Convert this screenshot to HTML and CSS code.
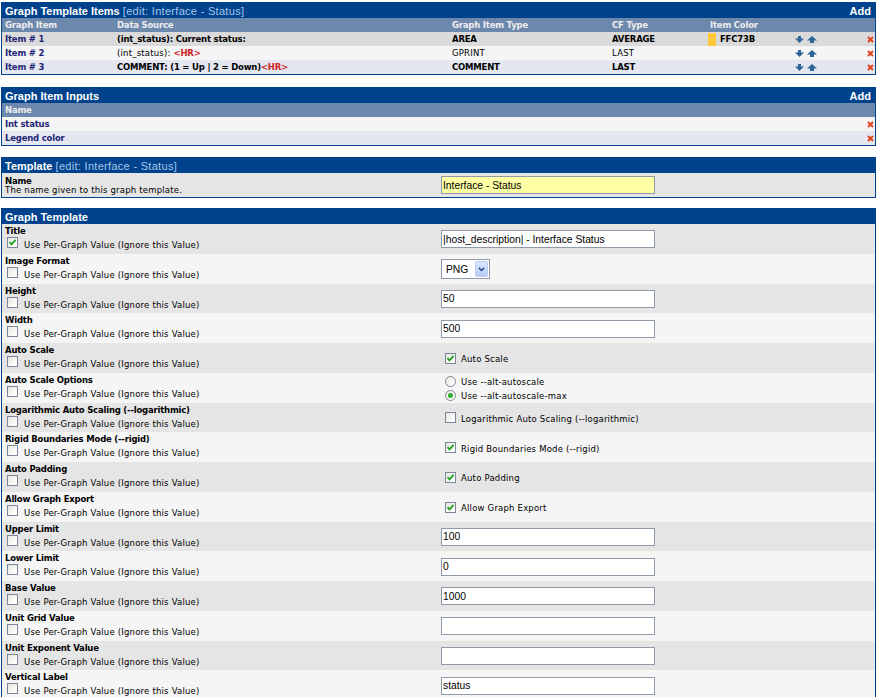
FILE: index.html
```html
<!DOCTYPE html>
<html>
<head>
<meta charset="utf-8">
<title>Graph Templates</title>
<link rel="stylesheet" href="styles.css">
</head>
<body>

<div class="panel">
  <div class="phead"><span>Graph Template Items <span class="edit">[edit: Interface - Status]</span></span><span>Add</span></div>
  <div class="irow ch">
    <span>Graph Item</span><span>Data Source</span><span>Graph Item Type</span><span>CF Type</span><span class="ic">Item Color</span><span></span><span></span>
  </div>
  <div class="irow r1">
    <span class="lnk">Item # 1</span>
    <span class="b">(int_status): Current status:</span>
    <span class="b">AREA</span>
    <span class="b">AVERAGE</span>
    <span class="colr"><span class="sw"></span><span class="b">FFC73B</span></span>
    <span class="arr">
      <svg width="9" height="7" viewBox="0 0 9 7"><path d="M3 0h3v2.5h3L4.5 7 0 2.5h3z" fill="#2E6597"/></svg>
      <svg width="10" height="7" viewBox="0 0 10 7"><path d="M5 0l5 4.5H7V7H3V4.5H0z" fill="#2E6597"/></svg>
    </span>
    <svg class="x" width="7" height="7" viewBox="0 0 7 7"><path d="M1 1l5 5M6 1L1 6" stroke="#E0461E" stroke-width="2"/></svg>
  </div>
  <div class="irow r2">
    <span class="lnk">Item # 2</span>
    <span>(int_status): <span class="hr">&lt;HR&gt;</span></span>
    <span>GPRINT</span>
    <span>LAST</span>
    <span></span>
    <span class="arr">
      <svg width="9" height="7" viewBox="0 0 9 7"><path d="M3 0h3v2.5h3L4.5 7 0 2.5h3z" fill="#2E6597"/></svg>
      <svg width="10" height="7" viewBox="0 0 10 7"><path d="M5 0l5 4.5H7V7H3V4.5H0z" fill="#2E6597"/></svg>
    </span>
    <svg class="x" width="7" height="7" viewBox="0 0 7 7"><path d="M1 1l5 5M6 1L1 6" stroke="#E0461E" stroke-width="2"/></svg>
  </div>
  <div class="irow r3">
    <span class="lnk">Item # 3</span>
    <span class="b">COMMENT: (1 = Up | 2 = Down)<span class="hr">&lt;HR&gt;</span></span>
    <span class="b">COMMENT</span>
    <span class="b">LAST</span>
    <span></span>
    <span class="arr">
      <svg width="9" height="7" viewBox="0 0 9 7"><path d="M3 0h3v2.5h3L4.5 7 0 2.5h3z" fill="#2E6597"/></svg>
      <svg width="10" height="7" viewBox="0 0 10 7"><path d="M5 0l5 4.5H7V7H3V4.5H0z" fill="#2E6597"/></svg>
    </span>
    <svg class="x" width="7" height="7" viewBox="0 0 7 7"><path d="M1 1l5 5M6 1L1 6" stroke="#E0461E" stroke-width="2"/></svg>
  </div>
</div>

<div class="panel gap11">
  <div class="phead"><span>Graph Item Inputs</span><span>Add</span></div>
  <div class="nrow ch"><span>Name</span><span></span></div>
  <div class="nrow r2">
    <span class="lnk">Int status</span>
    <svg class="x" width="7" height="7" viewBox="0 0 7 7"><path d="M1 1l5 5M6 1L1 6" stroke="#E0461E" stroke-width="2"/></svg>
  </div>
  <div class="nrow r3">
    <span class="lnk">Legend color</span>
    <svg class="x" width="7" height="7" viewBox="0 0 7 7"><path d="M1 1l5 5M6 1L1 6" stroke="#E0461E" stroke-width="2"/></svg>
  </div>
</div>

<div class="panel gap10">
  <div class="phead"><span>Template <span class="edit">[edit: Interface - Status]</span></span></div>
  <div class="trow">
    <div class="tlbl"><span class="name">Name</span><span class="desc">The name given to this graph template.</span></div>
    <div class="fval"><input class="inp yel" type="text" value="Interface - Status"></div>
  </div>
</div>

<div class="panel">
  <div class="phead"><span>Graph Template</span></div>

  <div class="frow g">
    <div class="flbl"><span class="name">Title</span><span class="cbline"><span class="cb on"><svg width="9" height="9" viewBox="0 0 9 9"><path d="M1.5 4.2l2 2.2L7.6 1.8" stroke="#21A121" stroke-width="1.8" fill="none"/></svg></span><span class="ct">Use Per-Graph Value (Ignore this Value)</span></span></div>
    <div class="fval"><input class="inp" type="text" value="|host_description| - Interface Status"></div>
  </div>

  <div class="frow l">
    <div class="flbl"><span class="name">Image Format</span><span class="cbline"><span class="cb"></span><span class="ct">Use Per-Graph Value (Ignore this Value)</span></span></div>
    <div class="fval"><span class="sel">PNG<span class="dd"><svg width="7" height="5" viewBox="0 0 7 5"><path d="M0.8 0.8l2.7 2.7 2.7-2.7" stroke="#29448F" stroke-width="1.5" fill="none"/></svg></span></span></div>
  </div>

  <div class="frow g">
    <div class="flbl"><span class="name">Height</span><span class="cbline"><span class="cb"></span><span class="ct">Use Per-Graph Value (Ignore this Value)</span></span></div>
    <div class="fval"><input class="inp" type="text" value="50"></div>
  </div>

  <div class="frow l">
    <div class="flbl"><span class="name">Width</span><span class="cbline"><span class="cb"></span><span class="ct">Use Per-Graph Value (Ignore this Value)</span></span></div>
    <div class="fval"><input class="inp" type="text" value="500"></div>
  </div>

  <div class="frow g">
    <div class="flbl"><span class="name">Auto Scale</span><span class="cbline"><span class="cb"></span><span class="ct">Use Per-Graph Value (Ignore this Value)</span></span></div>
    <div class="fval"><span class="vcb"><span class="cb on"><svg width="9" height="9" viewBox="0 0 9 9"><path d="M1.5 4.2l2 2.2L7.6 1.8" stroke="#21A121" stroke-width="1.8" fill="none"/></svg></span><span class="vt">Auto Scale</span></span></div>
  </div>

  <div class="frow l">
    <div class="flbl"><span class="name">Auto Scale Options</span><span class="cbline"><span class="cb"></span><span class="ct">Use Per-Graph Value (Ignore this Value)</span></span></div>
    <div class="fval">
      <span class="vcb rl"><span class="rad"></span><span class="vt">Use --alt-autoscale</span></span>
      <span class="vcb rl"><span class="rad on"><span class="dot"></span></span><span class="vt">Use --alt-autoscale-max</span></span>
    </div>
  </div>

  <div class="frow g">
    <div class="flbl"><span class="name">Logarithmic Auto Scaling (--logarithmic)</span><span class="cbline"><span class="cb"></span><span class="ct">Use Per-Graph Value (Ignore this Value)</span></span></div>
    <div class="fval"><span class="vcb"><span class="cb"></span><span class="vt">Logarithmic Auto Scaling (--logarithmic)</span></span></div>
  </div>

  <div class="frow l">
    <div class="flbl"><span class="name">Rigid Boundaries Mode (--rigid)</span><span class="cbline"><span class="cb"></span><span class="ct">Use Per-Graph Value (Ignore this Value)</span></span></div>
    <div class="fval"><span class="vcb"><span class="cb on"><svg width="9" height="9" viewBox="0 0 9 9"><path d="M1.5 4.2l2 2.2L7.6 1.8" stroke="#21A121" stroke-width="1.8" fill="none"/></svg></span><span class="vt">Rigid Boundaries Mode (--rigid)</span></span></div>
  </div>

  <div class="frow g">
    <div class="flbl"><span class="name">Auto Padding</span><span class="cbline"><span class="cb"></span><span class="ct">Use Per-Graph Value (Ignore this Value)</span></span></div>
    <div class="fval"><span class="vcb"><span class="cb on"><svg width="9" height="9" viewBox="0 0 9 9"><path d="M1.5 4.2l2 2.2L7.6 1.8" stroke="#21A121" stroke-width="1.8" fill="none"/></svg></span><span class="vt">Auto Padding</span></span></div>
  </div>

  <div class="frow l">
    <div class="flbl"><span class="name">Allow Graph Export</span><span class="cbline"><span class="cb"></span><span class="ct">Use Per-Graph Value (Ignore this Value)</span></span></div>
    <div class="fval"><span class="vcb"><span class="cb on"><svg width="9" height="9" viewBox="0 0 9 9"><path d="M1.5 4.2l2 2.2L7.6 1.8" stroke="#21A121" stroke-width="1.8" fill="none"/></svg></span><span class="vt">Allow Graph Export</span></span></div>
  </div>

  <div class="frow g">
    <div class="flbl"><span class="name">Upper Limit</span><span class="cbline"><span class="cb"></span><span class="ct">Use Per-Graph Value (Ignore this Value)</span></span></div>
    <div class="fval"><input class="inp" type="text" value="100"></div>
  </div>

  <div class="frow l">
    <div class="flbl"><span class="name">Lower Limit</span><span class="cbline"><span class="cb"></span><span class="ct">Use Per-Graph Value (Ignore this Value)</span></span></div>
    <div class="fval"><input class="inp" type="text" value="0"></div>
  </div>

  <div class="frow g">
    <div class="flbl"><span class="name">Base Value</span><span class="cbline"><span class="cb"></span><span class="ct">Use Per-Graph Value (Ignore this Value)</span></span></div>
    <div class="fval"><input class="inp" type="text" value="1000"></div>
  </div>

  <div class="frow l">
    <div class="flbl"><span class="name">Unit Grid Value</span><span class="cbline"><span class="cb"></span><span class="ct">Use Per-Graph Value (Ignore this Value)</span></span></div>
    <div class="fval"><input class="inp" type="text" value=""></div>
  </div>

  <div class="frow g">
    <div class="flbl"><span class="name">Unit Exponent Value</span><span class="cbline"><span class="cb"></span><span class="ct">Use Per-Graph Value (Ignore this Value)</span></span></div>
    <div class="fval"><input class="inp" type="text" value=""></div>
  </div>

  <div class="frow l">
    <div class="flbl"><span class="name">Vertical Label</span><span class="cbline"><span class="cb"></span><span class="ct">Use Per-Graph Value (Ignore this Value)</span></span></div>
    <div class="fval"><input class="inp" type="text" value="status"></div>
  </div>
</div>

</body>
</html>
```

FILE: styles.css
```css
* { box-sizing: border-box; }

html, body {
  margin: 0;
  background: #ffffff;
}

body {
  padding: 2px 1px 0 1px;
  font-family: "DejaVu Sans", Verdana, sans-serif;
  font-size: 8.5px;
  letter-spacing: 0.2px;
  color: #000000;
}

.panel {
  border: 1px solid #00438C;
  margin-bottom: 12px;
}

.panel.gap11 { margin-bottom: 11px; }
.panel.gap10 { margin-bottom: 10px; }

.phead {
  background: #00438C;
  height: 15px;
  display: flex;
  align-items: center;
  justify-content: space-between;
  padding: 0 4px 0 3px;
  font-family: "Liberation Sans", Arial, sans-serif;
  font-size: 11px;
  font-weight: bold;
  letter-spacing: 0;
  color: #ffffff;
}

.phead .edit {
  font-weight: normal;
  color: #A8C6EC;
  letter-spacing: 0.3px;
}

.ch {
  background: #6D88AD;
  color: #EDEDED;
  font-weight: bold;
  letter-spacing: -0.2px;
}

.r1 { background: #DADADA; }
.r2 { background: #F5F5F5; }
.r3 { background: #E4E6F0; }

.irow {
  display: grid;
  grid-template-columns: 112px 335px 160px 96px 87px 1fr 7px;
  height: 14px;
  align-items: center;
  padding: 0 1px 0 3px;
  white-space: nowrap;
}

.irow .ic { padding-left: 2px; }

.nrow {
  display: grid;
  grid-template-columns: 1fr 7px;
  height: 14px;
  align-items: center;
  padding: 0 1px 0 3px;
}

.lnk {
  color: #1F2577;
  font-weight: bold;
  letter-spacing: -0.2px;
}

.b {
  font-weight: bold;
  letter-spacing: -0.2px;
}

.hr {
  color: #CC2424;
  font-weight: bold;
  letter-spacing: -0.2px;
}

.colr {
  display: flex;
  align-items: center;
  height: 14px;
}

.sw {
  width: 8px;
  height: 13px;
  background: #FFC73B;
  margin-right: 4px;
}

.arr {
  display: flex;
  align-items: center;
  gap: 3px;
}

.x { display: block; }

/* template name row */
.trow {
  display: grid;
  grid-template-columns: 439px 1fr;
  height: 24px;
  background: #E5E5E5;
}

.tlbl {
  display: flex;
  flex-direction: column;
  padding: 3px 0 0 3px;
}

.tlbl .name {
  font-weight: bold;
  letter-spacing: -0.2px;
  line-height: 10px;
}

.tlbl .desc {
  line-height: 8px;
}

/* graph template rows */
.frow {
  display: grid;
  grid-template-columns: 439px 1fr;
  height: 29.75px;
}

.frow.g { background: #E5E5E5; }
.frow.l { background: #F5F5F5; }

.flbl {
  display: flex;
  flex-direction: column;
  padding: 2px 0 0 3px;
}

.flbl .name {
  font-weight: bold;
  letter-spacing: -0.2px;
  line-height: 11px;
}

.cbline {
  display: flex;
  align-items: flex-end;
  padding-left: 2px;
}

.cbline .ct {
  margin-left: 6px;
  line-height: 10px;
  margin-bottom: -2px;
}

.cb {
  width: 11px;
  height: 11px;
  border: 1px solid #7B8698;
  background: linear-gradient(135deg, #E6E6E0 0%, #FFFFFF 85%);
  display: flex;
  align-items: center;
  justify-content: center;
  flex: none;
}

.cb svg { display: block; }

.fval {
  display: flex;
  flex-direction: column;
  justify-content: center;
  align-items: flex-start;
}

.frow .fval { padding-top: 1px; }

.inp {
  width: 214px;
  height: 18px;
  margin: 0;
  border: 1px solid #8E9AA8;
  background: #ffffff;
  font-family: "Liberation Sans", Arial, sans-serif;
  font-size: 10.3px;
  letter-spacing: 0;
  color: #000;
  padding: 0 1px;
  outline: none;
}

.inp.yel { background: #FFFFA6; }

.sel {
  display: flex;
  align-items: center;
  width: 49px;
  height: 20px;
  border: 1px solid #8E9AA8;
  background: #ffffff;
  padding-left: 4px;
  font-family: "Liberation Sans", Arial, sans-serif;
  font-size: 10.3px;
  letter-spacing: 0;
}

.dd {
  margin-left: auto;
  margin-right: 1px;
  width: 13px;
  height: 16px;
  border: 1px solid #B9CBF3;
  border-radius: 2px;
  background: linear-gradient(#DCE6FD, #B8CCF8);
  display: flex;
  align-items: center;
  justify-content: center;
}

.dd svg { display: block; }

.vcb {
  display: flex;
  align-items: center;
  padding-left: 4px;
  height: 14px;
}

.vt {
  margin-left: 5px;
  line-height: 12px;
  padding-top: 2px;
}

.rad {
  width: 11px;
  height: 11px;
  border: 1px solid #7B8698;
  border-radius: 50%;
  background: linear-gradient(135deg, #E6E6E0 0%, #FFFFFF 85%);
  display: flex;
  align-items: center;
  justify-content: center;
  flex: none;
}

.rad .dot {
  width: 5px;
  height: 5px;
  border-radius: 50%;
  background: #2DB02D;
}
```
